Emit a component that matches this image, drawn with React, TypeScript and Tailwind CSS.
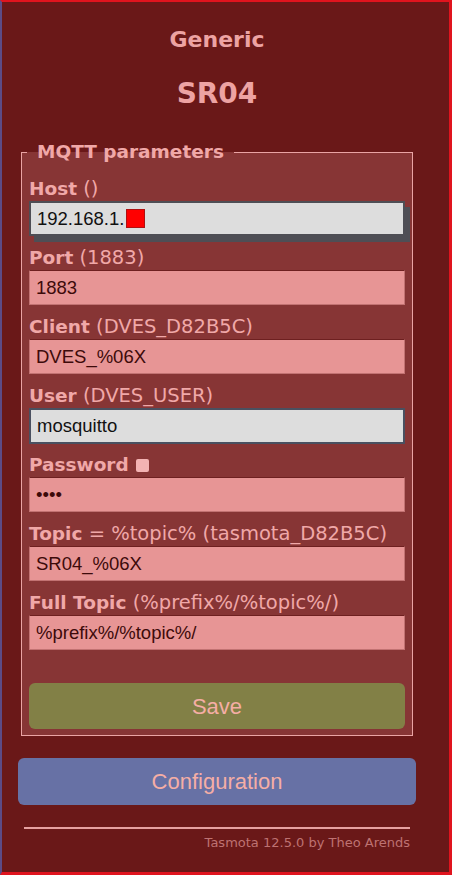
const fields = [
  { name: "Port", hint: "(1883)", value: "1883" },
  { name: "Client", hint: "(DVES_D82B5C)", value: "DVES_%06X" },
];

const fields2 = [
  { name: "Topic", hint: "= %topic% (tasmota_D82B5C)", value: "SR04_%06X" },
  { name: "Full Topic", hint: "(%prefix%/%topic%/)", value: "%prefix%/%topic%/" },
];

function Label({ name, hint, box }: { name: string; hint?: string; box?: boolean }) {
  return (
    <div className="h-[24px] leading-[24px] text-[18.5px] text-[#f0a8a8] whitespace-nowrap">
      <b>{name}</b>
      {hint ? <span className="text-[19.5px]"> {hint}</span> : null}
      {box && <span className="inline-block w-[13px] h-[13px] ml-[7px] bg-[#f3b3b3] rounded-[2px] align-[-1px]" />}
    </div>
  );
}

function PinkInput({ value }: { value: string }) {
  return (
    <div className="h-[35px] flex items-center pl-[6px] bg-[#e79595] border border-[#c27272] border-t-[#6e2020] font-['Liberation_Sans',sans-serif] text-[18.5px] text-[#3d0a0a]">
      {value}
    </div>
  );
}

export default function App() {
  return (
    <div className="w-[452px] h-[875px] bg-[#6a1818] border-t-2 border-r-[3px] border-b-[3px] border-[#e0141e] border-l-2 border-l-[#5c4b86] font-['DejaVu_Sans',sans-serif] overflow-hidden">
      <div className="w-[398px] ml-[16px]">
        {/* Header */}
        <div className="mt-[24px] text-center text-[22px] leading-[28px] font-bold text-[#eda3a3]">Generic</div>
        <div className="mt-[23px] text-center text-[28px] leading-[34px] font-bold text-[#eda3a3]">SR04</div>

        {/* MQTT form */}
        <fieldset className="mt-[29px] mx-[3px] border border-[#eaa4a4] bg-[#873535] px-[7px] pt-[13px] pb-[6px]">
          <legend className="ml-[-2px] px-[10px] text-[18.5px] leading-[24px] font-bold text-[#f0a8a8]">MQTT parameters</legend>

          <Label name="Host" hint="()" />
          <div className="h-[35px] flex items-center pl-[6px] bg-[#dddddd] border-2 border-[#4e4e55] shadow-[5px_6px_0_0_#4e4e55] font-['Liberation_Sans',sans-serif] text-[18.5px] text-[#111]">
            192.168.1.
            <span className="inline-block w-[19px] h-[19px] ml-[2px] bg-[#ff0000] border border-[#b01010]" />
          </div>

          {fields.map((f) => (
            <div key={f.name} className="mt-[10px]">
              <Label name={f.name} hint={f.hint} />
              <PinkInput value={f.value} />
            </div>
          ))}

          <div className="mt-[10px]">
            <Label name="User" hint="(DVES_USER)" />
            <div className="h-[36px] flex items-center pl-[6px] bg-[#dddddd] border-2 border-[#4a5060] font-['Liberation_Sans',sans-serif] text-[18.5px] text-[#111]">
              mosquitto
            </div>
          </div>

          <div className="mt-[9px]">
            <Label name="Password" box />
            <PinkInput value="••••" />
          </div>

          {fields2.map((f) => (
            <div key={f.name} className="mt-[10px]">
              <Label name={f.name} hint={f.hint} />
              <PinkInput value={f.value} />
            </div>
          ))}

          <button className="mt-[33px] w-full h-[46px] rounded-[6px] bg-[#828046] text-[#f5aea5] text-[22px] font-['Liberation_Sans',sans-serif]">
            Save
          </button>
        </fieldset>

        <button className="mt-[22px] w-full h-[47px] rounded-[6px] bg-[#6771a5] text-[#f5aea5] text-[22px] font-['Liberation_Sans',sans-serif]">
          Configuration
        </button>

        <div className="mt-[22px] mx-[6px] h-[2px] bg-[#e6a0a0]" />
        <div className="mr-[6px] mt-[5px] text-right text-[13px] leading-[18px] text-[#be7272]">
          Tasmota 12.5.0 by Theo Arends
        </div>
      </div>
    </div>
  );
}
